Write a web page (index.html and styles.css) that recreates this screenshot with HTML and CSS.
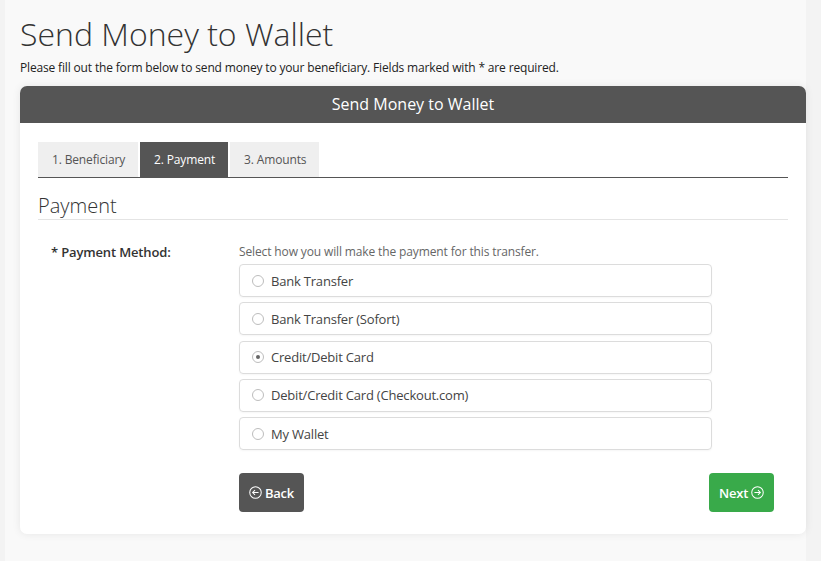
FILE: index.html
```html
<!DOCTYPE html>
<html lang="en">
<head>
<meta charset="utf-8">
<title>Send Money to Wallet</title>
<link rel="stylesheet" href="styles.css">
</head>
<body>
<div class="page">
  <h1 class="title">Send Money to Wallet</h1>
  <p class="intro">Please fill out the form below to send money to your beneficiary. Fields marked with * are required.</p>
  <div class="card">
    <div class="card-head">Send Money to Wallet</div>
    <div class="card-body">
      <div class="tabs">
        <div class="tab">1. Beneficiary</div>
        <div class="tab active">2. Payment</div>
        <div class="tab">3. Amounts</div>
      </div>
      <h2 class="section">Payment</h2>
      <div class="field">
        <div class="label">* Payment Method:</div>
        <div class="control">
          <div class="hint">Select how you will make the payment for this transfer.</div>
          <div class="options">
            <label class="option"><span class="radio"></span>Bank Transfer</label>
            <label class="option"><span class="radio"></span>Bank Transfer (Sofort)</label>
            <label class="option"><span class="radio checked"></span>Credit/Debit Card</label>
            <label class="option"><span class="radio"></span>Debit/Credit Card (Checkout.com)</label>
            <label class="option"><span class="radio"></span>My Wallet</label>
          </div>
          <div class="actions">
            <button class="btn btn-back"><svg class="ico" viewBox="0 0 14 14" width="13" height="13"><circle cx="7" cy="7" r="6.2" fill="none" stroke="currentColor" stroke-width="1.1"/><path d="M10.3 7H3.9M6.5 4.4L3.9 7l2.6 2.6" fill="none" stroke="currentColor" stroke-width="1.1"/></svg>Back</button>
            <button class="btn btn-next">Next<svg class="ico" viewBox="0 0 14 14" width="13" height="13"><circle cx="7" cy="7" r="6.2" fill="none" stroke="currentColor" stroke-width="1.1"/><path d="M3.7 7h6.4M7.5 4.4L10.1 7 7.5 9.6" fill="none" stroke="currentColor" stroke-width="1.1"/></svg></button>
          </div>
        </div>
      </div>
    </div>
  </div>
</div>
</body>
</html>
```

FILE: styles.css
```css
* { box-sizing: border-box; }
html, body { margin: 0; padding: 0; }
body {
  background: #f3f3f3;
  font-family: "Open Sans", "Liberation Sans", sans-serif;
  color: #333;
  height: 561px;
  overflow: hidden;
}
.page {
  margin-left: 5px;
  width: 801px;
  height: 561px;
  background: #f9f9f9;
  padding: 12px 0 0 15px;
}
.title {
  margin: 0;
  font-size: 32px;
  font-weight: 300;
  line-height: 43px;
  color: #333;
}
.intro {
  margin: 4px 0 0;
  font-size: 12px;
  letter-spacing: -0.16px;
  line-height: 17px;
  color: #222;
}
.card {
  margin-top: 10px;
  width: 786px;
  background: #fff;
  border-radius: 7px;
  box-shadow: 0 0 8px rgba(0,0,0,0.08);
}
.card-head {
  height: 37px;
  background: #555;
  color: #fff;
  border-radius: 7px 7px 0 0;
  font-size: 16px;
  line-height: 37px;
  text-align: center;
}
.card-body {
  padding: 19px 18px 22px;
}
.tabs {
  display: flex;
  gap: 2px;
  border-bottom: 1px solid #555;
}
.tab {
  height: 35px;
  line-height: 35px;
  padding: 0 13px 0 14px;
  font-size: 12px;
  letter-spacing: -0.15px;
  background: #efefef;
  color: #555;
}
.tab.active {
  background: #555;
  color: #fff;
}
.section {
  margin: 15px 0 0;
  font-size: 20px;
  font-weight: 300;
  line-height: 26px;
  color: #333;
  border-bottom: 1px solid #e4e4e4;
  height: 27px;
}
.field {
  display: flex;
  margin-top: 23px;
}
.label {
  width: 201px;
  padding-left: 13px;
  font-size: 13px;
  font-weight: 600;
  letter-spacing: -0.15px;
  color: #333;
  line-height: 18px;
}
.control {
  width: 535px;
}
.hint {
  font-size: 12px;
  letter-spacing: -0.13px;
  color: #666;
  line-height: 17px;
}
.options {
  display: flex;
  flex-direction: column;
  gap: 5.25px;
  width: 473px;
  margin-top: 4px;
}
.option {
  display: flex;
  align-items: center;
  height: 33px;
  border: 1px solid #dcdcdc;
  border-radius: 4px;
  padding-left: 12px;
  font-size: 13px;
  letter-spacing: -0.2px;
  color: #444;
  box-shadow: 0 1px 2px rgba(0,0,0,0.04);
}
.radio {
  width: 12px;
  height: 12px;
  border: 1px solid #bdbdbd;
  border-radius: 50%;
  margin-right: 7px;
  background: #fff;
  display: flex;
  align-items: center;
  justify-content: center;
}
.radio.checked::after {
  content: "";
  width: 4px;
  height: 4px;
  border-radius: 50%;
  background: #666;
}
.actions {
  display: flex;
  justify-content: space-between;
  margin-top: 23px;
}
.btn {
  height: 39px;
  width: 65px;
  border: none;
  border-radius: 4px;
  color: #fff;
  font-family: "Open Sans", "Liberation Sans", sans-serif;
  font-size: 13px;
  font-weight: 600;
  letter-spacing: -0.2px;
  display: flex;
  align-items: center;
  justify-content: center;
  gap: 3px;
  padding: 0;
}
.btn-back { background: #555; }
.btn-next { background: #39aa4a; }
.ico { display: block; }
```
